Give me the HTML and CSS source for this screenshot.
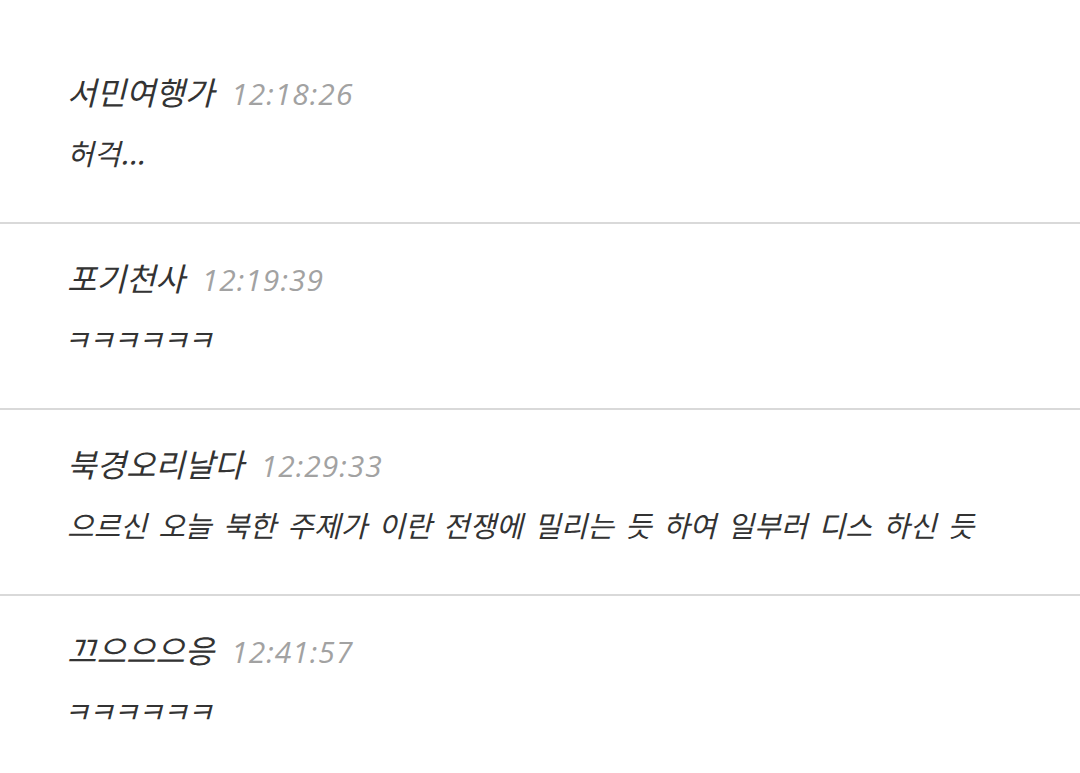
FILE: index.html
```html
<!DOCTYPE html>
<html lang="ko">
<head>
<meta charset="utf-8">
<link rel="stylesheet" href="styles.css">
</head>
<body>
<ul class="comments">
  <li class="comment">
    <div class="meta"><span class="name">서민여행가</span><span class="time">12:18:26</span></div>
    <p class="text">허걱...</p>
  </li>
  <li class="comment">
    <div class="meta"><span class="name">포기천사</span><span class="time">12:19:39</span></div>
    <p class="text jamo">ㅋㅋㅋㅋㅋㅋ</p>
  </li>
  <li class="comment">
    <div class="meta"><span class="name">북경오리날다</span><span class="time">12:29:33</span></div>
    <p class="text">으르신 오늘 북한 주제가 이란 전쟁에 밀리는 듯 하여 일부러 디스 하신 듯</p>
  </li>
  <li class="comment">
    <div class="meta"><span class="name">끄으으으응</span><span class="time">12:41:57</span></div>
    <p class="text jamo">ㅋㅋㅋㅋㅋㅋ</p>
  </li>
</ul>
</body>
</html>
```
FILE: styles.css
```css
html, body {
  margin: 0;
  padding: 0;
  background: #ffffff;
}
body {
  font-family: "Noto Sans CJK KR", "Noto Sans", sans-serif;
  font-style: oblique;
  overflow: hidden;
}
.comments {
  list-style: none;
  margin: 0;
  padding: 38px 0 0 0;
}
.comment {
  padding: 33px 40px 50px 67px;
  border-bottom: 2px solid #d9d9d9;
}
.meta {
  display: flex;
  align-items: baseline;
  gap: 17px;
  height: 40px;
  line-height: 40px;
}
.name {
  font-size: 32px;
  color: #333333;
}
.time {
  font-family: "Open Sans", "Noto Sans", sans-serif;
  font-style: italic;
  font-weight: 400;
  font-size: 30px;
  letter-spacing: 1px;
  color: #a2a2a2;
}
.text {
  margin: 21px 0 0 0;
  font-size: 29px;
  line-height: 40px;
  word-spacing: 3px;
  color: #333333;
  white-space: nowrap;
}
.jamo {
  letter-spacing: -2px;
  text-indent: -4px;
}
```
